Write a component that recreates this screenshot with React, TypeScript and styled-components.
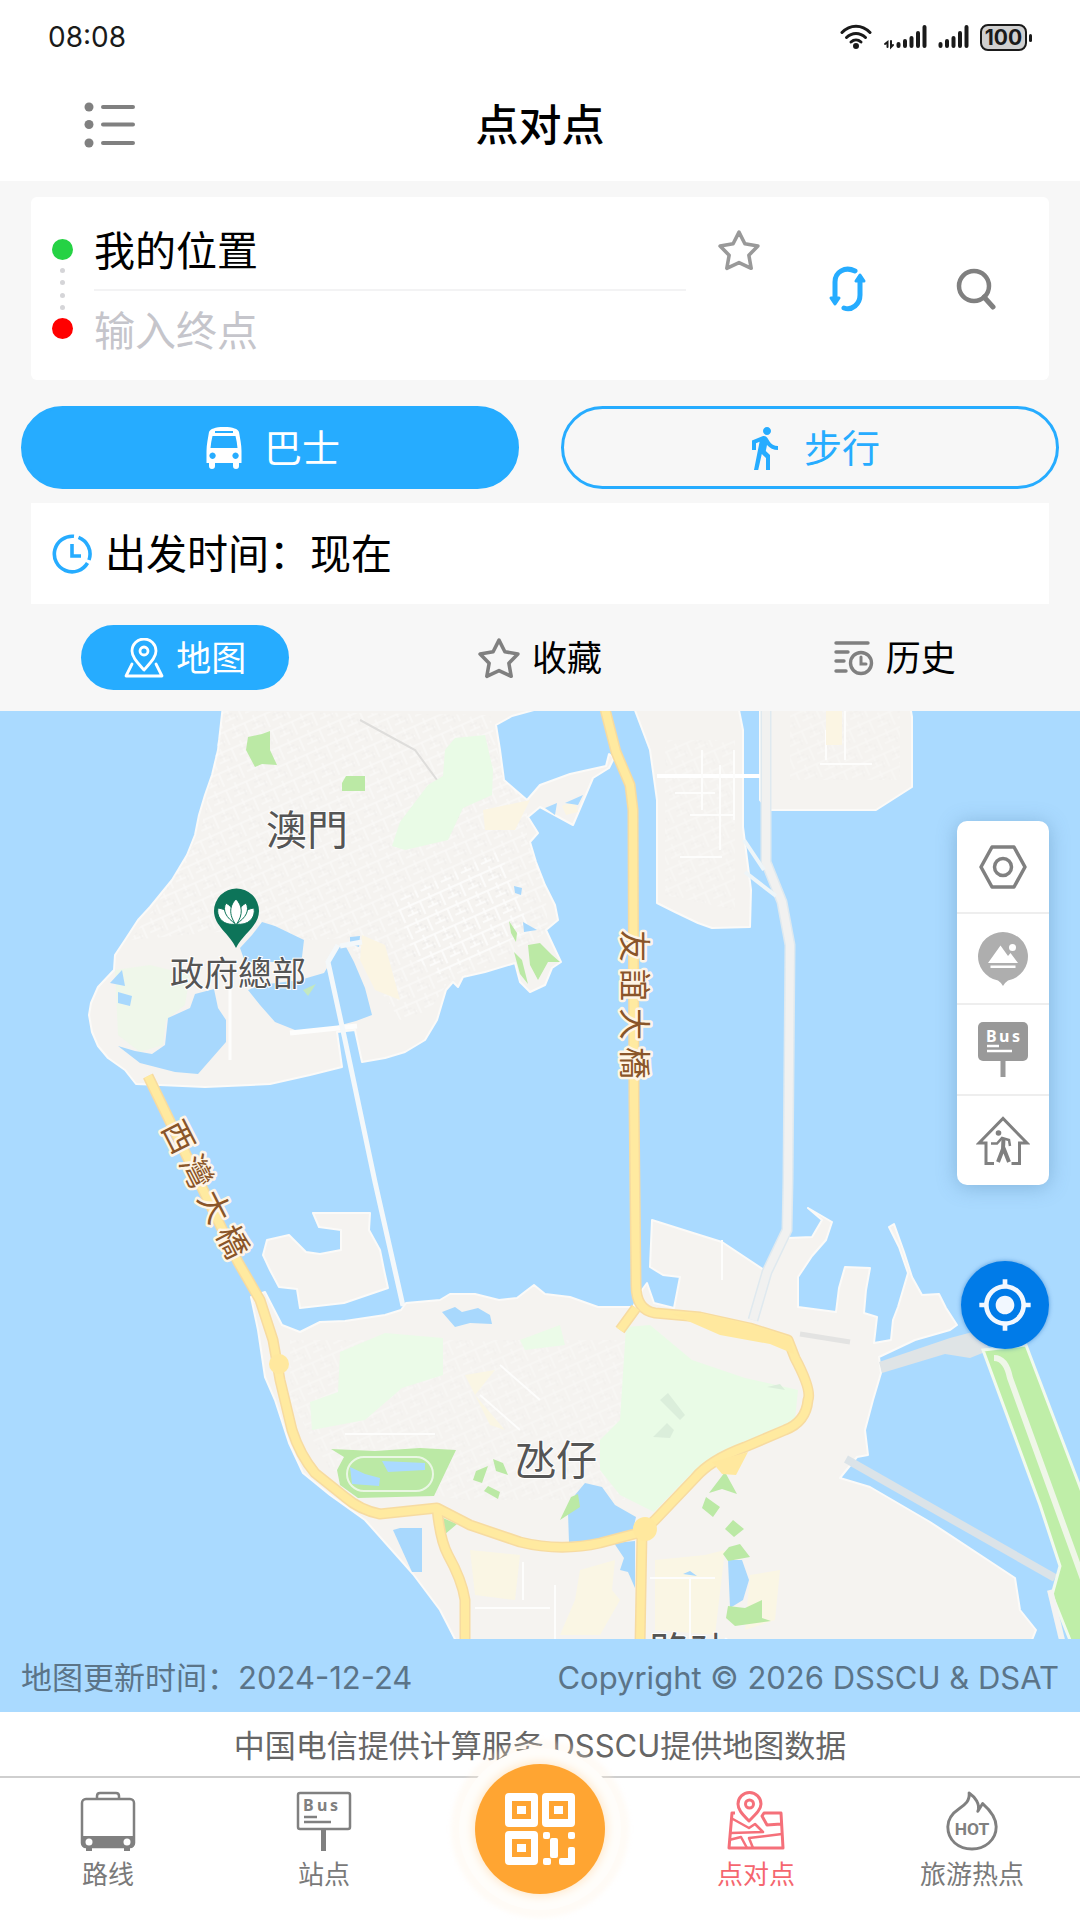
import React, { useState } from "react";
import styled, { createGlobalStyle, css } from "styled-components";
import { MdDirectionsWalk, MdMyLocation } from "react-icons/md";

const BLUE = "#26acff";
const GREY = "#808080";

const GlobalStyle = createGlobalStyle`
  * {
    box-sizing: border-box;
  }
  body {
    margin: 0;
    background: #fff;
    font-family: Inter, "Noto Sans CJK SC", sans-serif;
    color: #000;
  }
  button, input {
    font: inherit;
    color: inherit;
    border: 0;
    padding: 0;
    background: none;
  }
  svg {
    display: block;
    flex: none;
  }
`;

// ---------- icons ----------
const STAR = "M20 3 L25.6 14 L38 16.2 L29.4 25 L31.6 37.4 L20 32 L8.4 37.4 L10.6 25 L2 16.2 L14.4 14 Z";

const StarIcon = ({ color = "#999" }: { color?: string }) => (
  <svg width="42" height="42" viewBox="0 0 40 40" fill="none" stroke={color} strokeWidth="3.4" strokeLinejoin="round">
    <path d={STAR} />
  </svg>
);

const WifiIcon = () => (
  <svg width="32" height="26" viewBox="0 0 32 26" fill="none" stroke="#1a1a1a" strokeWidth="3" strokeLinecap="round">
    <path d="M2 8.5 C10 0 22 0 30 8.5" />
    <path d="M6.5 13.5 C12 8 20 8 25.5 13.5" />
    <path d="M11 18 C14 15.3 18 15.3 21 18" />
    <circle cx="16" cy="22" r="2" fill="#1a1a1a" strokeWidth="2" />
  </svg>
);

const SignalIcon = ({ data }: { data?: boolean }) => (
  <svg width={data ? 44 : 31} height="26" viewBox={data ? "-13 0 44 26" : "0 0 31 26"} stroke="#1a1a1a" strokeWidth="4" strokeLinecap="round">
    <path d="M2.5 20 V22 M9 17 V22 M15.5 14 V22 M22 9 V22 M28.5 3 V22" />
    {data && <path d="M-8.5 23 V18 L-11 20 M-5 17 V23 L-3 21" strokeWidth="2" fill="none" />}
  </svg>
);

const MenuIcon = () => (
  <svg width="52" height="46" viewBox="0 0 52 46" stroke={GREY} strokeWidth="4" strokeLinecap="round" fill={GREY}>
    <path d="M19 5 H49 M19 22.5 H49 M19 41 H49" />
    <g stroke="none">
      <circle cx="5" cy="5" r="4.5" />
      <circle cx="5" cy="22.5" r="4.5" />
      <circle cx="5" cy="41" r="4.5" />
    </g>
  </svg>
);

const SwapIcon = () => (
  <svg width="38" height="46" viewBox="0 0 38 46" fill="none" stroke={BLUE} strokeWidth="5" strokeLinecap="round" strokeLinejoin="round">
    <path d="M27 5 C17 0 7 6 7 16 V32" />
    <path d="M16 42 C24 45 32 38 32 29 V14" />
    <path d="M3 32 H11 L7 38 Z M28 15 H36 L32 9 Z" fill={BLUE} strokeWidth="3" />
  </svg>
);

const SearchIcon = () => (
  <svg width="40" height="42" viewBox="0 0 40 42" fill="none" stroke={GREY} strokeWidth="4.5">
    <circle cx="18" cy="18" r="15" />
    <path d="M28 29 L37 39" strokeWidth="5" strokeLinecap="round" />
  </svg>
);

const BusIcon = () => (
  <svg width="48" height="42" viewBox="-6 0 48 42">
    <path
      fill="#fff"
      fillRule="evenodd"
      d="M18 0 C27 0 32 2 33 5 C34 11 35.5 18 35.5 24 V36 H33 V39 Q33 42 30 42 Q27 42 27 39 V36 H9 V39 Q9 42 6 42 Q3 42 3 39 V36 H.5 V24 C.5 18 2 11 3 5 C4 2 9 0 18 0 Z M9 4 V6 H27 V4 Z M6.500 9 Q5 15 4.5 21 H31.5 Q31 15 29.5 9 Z M6.5 25.5 a3.2 3.2 0 1 0 .1 0 Z M29.5 25.5 a3.2 3.2 0 1 0 .1 0 Z"
    />
  </svg>
);

const ClockIcon = () => (
  <svg width="40" height="40" viewBox="0 0 40 40" fill="none" stroke={BLUE} strokeWidth="3.6">
    <path d="M22 2.3 A17.8 17.8 0 1 0 35.5 29" />
    <path d="M26.5 3.4 A17.8 17.8 0 0 1 37 26" />
    <path d="M20 10 V22 H29" />
  </svg>
);

const MapPinIcon = () => (
  <svg width="40" height="40" viewBox="0 0 40 40" fill="none" stroke="#fff" strokeWidth="2.8" strokeLinecap="round" strokeLinejoin="round">
    <path d="M20 32 C13 24 8 19 8 13 A12 12 0 0 1 32 13 C32 19 27 24 20 32 Z" />
    <circle cx="20" cy="13" r="4" />
    <path d="M8 26 L2 38 H38 L32 26" />
  </svg>
);

const HistoryIcon = () => (
  <svg width="40" height="36" viewBox="0 0 40 36" fill="none" stroke={GREY} strokeWidth="3.4" strokeLinecap="round">
    <path d="M2 3 H34 M2 12 H14 M2 21 H10 M2 31 H12" />
    <circle cx="27" cy="23" r="10.5" />
    <path d="M27 17 V24 H32" strokeWidth="3" />
  </svg>
);

const HexIcon = () => (
  <svg width="48" height="44" viewBox="0 0 48 44" fill="none" stroke={GREY} strokeWidth="3.5" strokeLinejoin="round">
    <path d="M13 2 H35 L46 22 L35 42 H13 L2 22 Z" />
    <circle cx="24" cy="22" r="8.5" />
  </svg>
);

const ScenicIcon = () => (
  <svg width="50" height="54" viewBox="0 0 50 54">
    <path fill="#aeaeae" d="M25 0 A25 24.5 0 0 1 30 48.5 Q27.5 50 25 54 Q22.5 50 20 48.5 A25 24.5 0 0 1 25 0 Z" />
    <path fill="#fff" d="M10 31 L22.5 13.5 L30 24 L32.5 21 L40 31 Z M12.5 33.5 H37.5 V36 H12.5 Z" />
    <circle cx="34.5" cy="15.5" r="3.5" fill="#fff" />
  </svg>
);

const BusSignIcon = () => (
  <svg width="50" height="56" viewBox="0 0 50 56">
    <rect width="50" height="39" rx="5" fill="#999" />
    <path d="M22.5 39 H27.5 V55 H22.5 Z" fill="#999" />
    <path d="M9 24 H21 M9 29 H34" stroke="#fff" strokeWidth="2.5" />
    <SignText x="8 21 34" y="20" fill="#fff">
      Bus
    </SignText>
  </svg>
);

const HomeWalkIcon = () => (
  <svg width="54" height="50" viewBox="0 0 54 50" fill="none" stroke={GREY} strokeWidth="3">
    <path d="M18 47.5 H10 V27 H3 L27 2.5 L51 27 H43.5 V47.5 H35.5" />
    <circle cx="22.5" cy="17" r="2.8" fill={GREY} stroke="none" />
    <path d="M15 27.5 H21 L26 22 L33 24 L34 30" strokeWidth="2.5" />
    <path d="M27.5 22 L27 33 L22 46 M27.5 32 L33 46" strokeWidth="4" />
  </svg>
);

const RouteIcon = () => (
  <svg width="56" height="60" viewBox="0 0 56 60" fill="none" stroke={GREY} strokeWidth="2.5">
    <path d="M17 7 V5 Q17 2 20 2 H36 Q39 2 39 5 V7" />
    <rect x="2" y="8" width="52" height="48" rx="4" />
    <path d="M3 45 H53 V56 H50 V60 H44 V57 H12 V60 H6 V56 H3 Z" fill={GREY} stroke="none" />
    <circle cx="9" cy="51" r="3.5" fill="#fff" stroke="none" />
    <circle cx="47" cy="51" r="3.5" fill="#fff" stroke="none" />
  </svg>
);

const StopIcon = () => (
  <svg width="56" height="60" viewBox="0 0 56 60" fill="none" stroke={GREY} strokeWidth="2.5">
    <rect x="2" y="2" width="52" height="36" rx="2" />
    <path d="M27.5 38 V60" strokeWidth="5" />
    <path d="M8 26 H21 M8 31 H35" />
    <SignText x="7 21 34" y="20" fill={GREY}>
      Bus
    </SignText>
  </svg>
);

const P2PIcon = () => (
  <svg width="58" height="60" viewBox="0 0 58 60" fill="none" stroke="#f5707a" strokeWidth="3" strokeLinejoin="round">
    <path d="M22 30 C14 22 11 18 11 13 A11.5 11.5 0 0 1 34 13 C34 18 30 22 22 30 Z" />
    <circle cx="22.5" cy="13" r="4" />
    <path d="M8 22 H5 L2 57 H56 L54 22 H37 L35 25 L40 34 L54 33" />
    <path d="M4 27 L22 37 L28 33 L36 41 L4 42 M2 49 L14 46 L20 57 M55 43 L22 47 L26 57" strokeWidth="2.5" />
  </svg>
);

const HotIcon = () => (
  <svg width="54" height="60" viewBox="0 0 54 62" fill="none" stroke={GREY} strokeWidth="3" strokeLinejoin="round">
    <path d="M24 2 C30 6 36 14 33 21 L38 13 C46 20 52 28 52 37 C52 51 40 60 27 60 C13 60 2 51 2 37 C2 28 8 22 14 18 C20 14 25 10 24 2 Z" />
    <HotText x="27" y="45" fill={GREY} stroke="none" textAnchor="middle">
      HOT
    </HotText>
  </svg>
);

const QrIcon = () => (
  <svg width="70" height="72" viewBox="0 0 70 72" fill="#fff">
    {["M0 0", "M37 0", "M0 38"].map((m) => (
      <path
        key={m}
        fillRule="evenodd"
        d={`${m} m4 0 h25 q4 0 4 4 v26 q0 4 -4 4 h-25 q-4 0 -4 -4 v-26 q0 -4 4 -4 z m3 8 v18 h19 v-18 z m5 5 h9 v8 h-9 z`}
      />
    ))}
    <g>
      <rect x="38" y="39" width="7" height="7" rx="2" />
      <rect x="45" y="45" width="8" height="20" rx="2" />
      <rect x="38" y="65" width="8" height="7" rx="2" />
      <rect x="63" y="39" width="7" height="7" rx="2" />
      <path d="M65 54 h3 q2 0 2 2 v14 q0 2 -2 2 h-12 q-2 0 -2 -2 v-3 q0 -2 2 -2 h7 v-9 q0 -2 2 -2 z" />
    </g>
  </svg>
);

// ---------- map drawing ----------
const MapArt = () => (
  <MapSvg viewBox="0 711 1080 928" preserveAspectRatio="xMidYMid slice" role="img" aria-label="澳門">
    <defs>
      <pattern id="streets" width="22" height="18" patternUnits="userSpaceOnUse" patternTransform="rotate(-24)">
        <path d="M0 4 H22 M0 13 H14 M6 0 V13 M17 4 V18" stroke="#fff" strokeWidth="1.5" fill="none" />
        <path d="M2 8 H10 M12 10 V17" stroke="#e9e7e5" strokeWidth="1" fill="none" />
      </pattern>
    </defs>
    <rect x="0" y="711" width="1080" height="928" fill="#aadaff" />

    {/* peninsula */}
    <g fill="#f5f3f0" stroke="#fbfaf8" strokeWidth="2" strokeLinejoin="round">
      <path d="M223 705 L218 750 L212 775 L205 795 L199 815 L195 835 L187 855 L172 880 L150 907 L138 920 L125 940 L115 955 L114 970 L98 987 L91 1003 L89 1015 L92 1032 L98 1046 L108 1058 L125 1070 L136 1084 L160 1085 L205 1087 L270 1084 L310 1075 L342 1067 L337 1032 L355 1030 L362 1062 L385 1058 L405 1052 L425 1040 L437 1020 L446 990 L453 982 L458 987 L463 977 L485 972 L515 963 L520 982 L530 992 L545 985 L552 968 L561 962 L553 945 L546 930 L558 920 L555 905 L545 885 L536 862 L530 842 L538 833 L528 817 L540 807 L573 825 L593 778 L609 768 L614 758 L609 754 L606 766 L570 774 L540 785 L527 800 L504 780 L500 750 L496 725 L512 716 L534 710 L534 705 Z" />
      <path d="M633 705 L650 750 L657 800 L657 903 L675 912 L698 923 L712 928 L750 927 L751 890 L743 827 L743 730 L738 705 Z" />
      <path d="M760 705 V800 L769 810 H876 L912 787 V717 L910 705 Z" />
    </g>
    <g fill="url(#streets)">
      <path d="M223 711 L212 775 L200 835 L155 907 L130 940 L240 930 L310 940 L345 938 L400 1020 L430 1010 L446 985 L515 955 L548 930 L545 885 L527 840 L527 800 L504 780 L490 715 Z" opacity=".45" />
      <path d="M395 900 L500 850 L530 930 L440 975 L415 960 Z" opacity=".6" />
      <path d="M665 740 H735 V910 L665 895 Z" opacity=".3" />
      <path d="M790 711 H900 V780 H790 Z" opacity=".3" />
    </g>
    <path d="M360 720 L415 750 L437 780 L458 818" fill="none" stroke="#dedddb" strokeWidth="2" />
    <path d="M657 776 H760" fill="none" stroke="#fff" strokeWidth="4" />
    <path d="M702 750 V810 M720 765 V850 M734 750 V820 M675 793 H715 M690 815 H735 M680 857 H722 M820 764 H872 M826 730 V760 M845 711 V760" fill="none" stroke="#fdfdfc" strokeWidth="2" />
    <path d="M445 750 L455 738 L485 735 L493 770 L492 795 L463 808 L448 840 L405 850 L392 846 L400 822 L428 785 L443 776 Z" fill="#e9fbe6" />
    <path d="M115 970 L150 965 L190 975 L185 1005 L166 1020 L163 1045 L140 1052 L118 1035 Z" fill="#eff7ea" />
    <path d="M362 935 L385 945 L400 1000 L375 990 L360 960 Z M826 711 H842 V745 H826 Z M483 810 L530 800 L515 830 L485 830 Z M562 806 L575 800 L578 812 L566 815 Z" fill="#fbf5e3" />
    <g fill="#bbe9a5">
      <path d="M248 737 L262 734 L270 731 L270 750 L277 765 L262 764 L255 767 L246 750 Z" />
      <path d="M346 776 H365 V791 H342 V783 Z" />
      <path d="M509 921 L517 933 L516 942 L511 933 Z M514 952 L522 960 L528 984 L520 974 Z M528 945 L540 943 L552 955 L560 962 L548 962 L538 980 L530 965 Z" />
    </g>
    <g fill="#a8d8fd">
      <path d="M262 922 L275 926 L304 940 L302 957 L300 962 L245 962 L240 948 L252 935 Z" />
      <path d="M300 980 L324 973 L330 963 L334 948 L345 945 L354 962 L365 988 L372 1015 L356 1021 L330 1028 L300 1032 L275 1022 L260 1005 L248 990 L260 985 Z" />
      <path d="M195 994 L214 989 L218 1008 L226 1020 L226 1042 L212 1058 L198 1074 L175 1072 L140 1063 L118 1046 L135 1051 L152 1054 L165 1045 L168 1018 L190 1008 Z" />
      <path d="M118 992 L132 996 L130 1006 L118 1003 Z M122 970 L125 986 L110 983 Z M350 937 L360 936 L359 947 L350 944 Z M514 886 L522 888 L521 895 L515 893 Z M523 922 L537 930 L524 932 Z" />
    </g>
    <path d="M545 808 L557 803 L555 815 Z M583 795 L578 805 L565 803 Z" fill="#aadaff" />
    <path d="M303 990 L316 984 L308 996 Z" fill="#c3e8c0" />
    <path d="M230 975 V1060" stroke="#fdfdfc" strokeWidth="3" />
    <path d="M290 1033 L357 1026" stroke="#fdfdfc" strokeWidth="5" />
    <path d="M338 945 L328 962 L345 1040 L375 1182 L403 1306" fill="none" stroke="#f4f8fa" strokeWidth="5" />
    <path d="M340 946 L362 942" fill="none" stroke="#f4f8fa" strokeWidth="5" />

    {/* Taipa and the islands */}
    <g fill="#f5f3f0" stroke="#fbfaf8" strokeWidth="2" strokeLinejoin="round">
      <path d="M251 1297 L265 1292 L282 1325 L300 1332 L320 1322 L345 1321 L385 1315 L401 1310 L406 1303 L440 1300 L450 1294 L475 1294 L499 1300 L517 1298 L526 1291 L534 1285 L545 1294 L570 1297 L598 1307 L633 1307 L642 1290 L647 1283 L654 1303 L674 1308 L680 1277 L663 1275 L650 1267 L652 1220 L690 1232 L722 1242 L764 1270 L788 1238 L812 1237 L822 1220 L808 1208 L832 1222 L826 1240 L812 1256 L798 1277 L798 1307 L836 1312 L839 1288 L845 1267 L870 1268 L866 1290 L864 1313 L877 1317 L874 1343 L891 1340 L893 1320 L898 1307 L908 1273 L899 1247 L889 1227 L894 1224 L904 1252 L912 1277 L922 1295 L939 1294 L946 1308 L957 1325 L950 1330 L915 1340 L879 1357 L881 1373 L873 1400 L865 1430 L868 1455 L857 1457 L840 1478 L870 1487 L930 1522 L1015 1578 L1020 1610 L1036 1630 L1030 1645 L458 1645 L440 1610 L413 1574 L365 1520 L330 1495 L303 1473 L289 1443 L275 1400 L265 1377 L258 1330 Z" />
      <path d="M313 1213 H370 L369 1230 L380 1250 L384 1270 L388 1288 L344 1303 L300 1308 L297 1289 L279 1287 L270 1270 L263 1255 L267 1240 L289 1235 L306 1252 L320 1254 L341 1250 V1230 L319 1227 Z" />
    </g>
    <path d="M290 1340 H640 L625 1500 H460 L330 1470 L290 1400 Z" fill="url(#streets)" opacity=".3" />
    <path d="M340 1352 L385 1333 L443 1338 V1375 L402 1388 L365 1420 L312 1430 L310 1402 L338 1392 Z M520 1340 L560 1325 L565 1345 L525 1350 Z" fill="#ebfbe8" />
    <path d="M626 1327 L650 1325 L692 1360 L745 1378 L798 1390 L795 1420 L733 1447 L690 1475 L654 1512 L620 1495 L600 1470 L600 1440 L620 1420 Z" fill="#e9fbe6" />
    <path d="M660 1400 L668 1393 L685 1415 L680 1420 Z M653 1437 L667 1423 L674 1430 L670 1438 Z M767 1387 L780 1384 L785 1390 Z" fill="#dbeedb" />
    <path d="M465 1375 L495 1370 L475 1395 L505 1430 L490 1425 Z M580 1570 L615 1560 L612 1590 L620 1600 L600 1635 H560 L575 1600 Z M655 1560 L705 1555 L725 1550 L715 1635 L655 1630 Z M750 1575 L780 1570 L775 1620 L745 1630 Z M470 1550 L520 1555 L515 1600 L475 1595 Z" fill="#faf6e4" />
    <path d="M345 1434 H435 M475 1608 H550 M523 1562 V1600 M650 1578 H715 M690 1578 V1639 M722 1240 V1280 M555 1585 V1639 M480 1395 L520 1430 M500 1365 L540 1400" fill="none" stroke="#fdfdfc" strokeWidth="2" />
    <g fill="#a8d8fd">
      <path d="M442 1312 L455 1307 L462 1312 L478 1308 L490 1315 L492 1324 L470 1323 L455 1327 Z" />
      <path d="M393 1530 L400 1528 H422 V1572 H412 Z" />
      <path d="M568 1513 L575 1495 L585 1483 L602 1487 L615 1505 L636 1517 L633 1530 L600 1540 L569 1542 Z" />
      <path d="M614 1543 L635 1541 V1588 L628 1572 L620 1570 L624 1558 Z" />
      <path d="M728 1560 H742 L749 1580 L743 1600 L730 1608 Z M683 1574 L690 1571 L697 1576 Z" />
    </g>
    <g fill="#bbe9a5">
      <path d="M331 1449 L375 1451 L420 1448 L456 1450 L434 1496 L358 1498 L340 1485 L337 1470 L344 1457 Z" />
      <path d="M476 1471 L488 1466 L482 1483 L473 1480 Z M493 1459 L503 1463 L508 1475 L496 1471 Z M488 1486 L500 1492 L498 1499 L484 1491 Z M443 1518 L457 1524 L444 1535 Z" />
      <path d="M571 1497 L578 1494 L580 1507 L560 1520 Z M725 1472 L737 1494 L722 1489 L709 1493 Z M706 1497 L720 1507 L713 1517 L702 1508 Z M733 1520 L744 1529 L734 1537 L725 1529 Z M729 1547 L740 1544 L750 1557 L728 1561 L723 1554 Z" />
      <path d="M728 1606 L745 1608 L762 1600 V1618 L771 1621 L735 1626 L726 1618 Z" />
    </g>
    <rect x="347" y="1457" width="86" height="34" rx="17" fill="none" stroke="#eaf7e4" strokeWidth="2" />
    <path d="M350 1467 L365 1474 L380 1478 L379 1486 L352 1484 Z M382 1461 L425 1463 L425 1470 L388 1472 Z" fill="#aadaff" />

    {/* airport runway */}
    <path d="M879 1362 L950 1338 L980 1330 L990 1350 L970 1358 L945 1354 L882 1373 Z" fill="#dfe4e6" />
    <path d="M846 1459 L1055 1578" stroke="#dbe3e8" strokeWidth="8" />
    <path d="M983 1350 L1026 1345 L1085 1500 V1645 H1072 L1052 1595 L1060 1566 L1040 1505 Z" fill="#bfeea8" stroke="#f2faee" strokeWidth="3" />
    <path d="M1050 1590 L1062 1640" stroke="#f4f3f1" strokeWidth="6" />
    <path d="M994 1358 Q1006 1358 1010 1378 L1084 1582" fill="none" stroke="#eff6e8" strokeWidth="6" />

    {/* minor bridge */}
    <path d="M766 711 V862 L782 902 L790 945 L788 1180 L787 1230 L767 1272 L753 1320" fill="none" stroke="#dfe9ef" strokeWidth="11" />
    <path d="M766 711 V862 L782 902 L790 945 L788 1180 L787 1230 L767 1272 L753 1320" fill="none" stroke="#f1f1f0" strokeWidth="8" />
    <path d="M744 840 L764 870 M745 872 L776 896" fill="none" stroke="#eef5f8" strokeWidth="4" />
    <path d="M800 1334 L850 1342" stroke="#e3e3e2" strokeWidth="5" />

    {/* highways */}
    {["#f7dba0", "#ffeaa0"].map((color, i) => (
      <g key={color} fill="none" stroke={color} strokeWidth={i ? 8 : 11} strokeLinejoin="round">
        <path d="M604 705 L616 752 L630 785 L633 810 L634 1100 L636 1285 Q636 1310 655 1313 L700 1317 L750 1328 L788 1340 L795 1358 Q812 1390 808 1400 Q806 1422 785 1430 L745 1447 Q710 1460 695 1478 L655 1520 L642 1532 L600 1543 Q560 1552 520 1542 L470 1525 L437 1508 L380 1514 Q360 1510 345 1497 L315 1473 Q300 1455 292 1430 L280 1380 L273 1340 L260 1300 L238 1262 L148 1076" />
        <path d="M437 1508 Q440 1540 448 1555 Q462 1580 465 1600 V1645 M642 1532 L640 1645 M636 1308 L620 1330" />
      </g>
    ))}
    <circle cx="279" cy="1364" r="10" fill="#ffe89e" />
    <circle cx="645" cy="1529" r="12" fill="#ffe89e" />
    <path d="M672 1314 L700 1313 L760 1327 L790 1338 L794 1354 L770 1344 L720 1335 Z M712 1462 L748 1452 L736 1475 L722 1474 Z" fill="#ffe89e" />

    {/* place names */}
    <PlaceName x="307" y="845" $size={41}>澳門</PlaceName>
    <PlaceName x="556" y="1475" $size={41}>氹仔</PlaceName>
    <PlaceName x="690" y="1667" $size={41}>路氹</PlaceName>
    <PlaceName x="238" y="986" $size={34}>政府總部</PlaceName>
    {["友", "誼", "大", "橋"].map((c, i) => (
      <BridgeName key={c} transform={`translate(634 ${946 + i * 39}) rotate(90)`} y="11">{c}</BridgeName>
    ))}
    {["西", "灣", "大", "橋"].map((c, i) => (
      <BridgeName key={c} transform={`translate(${178 + i * 18} ${1137 + i * 35}) rotate(63)`} y="11">{c}</BridgeName>
    ))}

    {/* headquarters pin */}
    <path d="M236 948 C230 934 214 926 214 911 A22.5 22.5 0 0 1 259 911 C259 926 243 934 236 948 Z" fill="#0d7459" />
    <g fill="#fff" stroke="#0d7459" strokeWidth="1">
      <path d="M236 924 C224 926 216 918 218 908 C226 909 233 914 236 924 Z M236 924 C248 926 256 918 254 908 C246 909 239 914 236 924 Z" />
      <path d="M236 924 C226 918 222 910 226 903 C233 907 236 914 236 924 Z M236 924 C246 918 250 910 246 903 C239 907 236 914 236 924 Z" />
      <path d="M236 925 C228 914 230 905 236 899 C242 905 244 914 236 925 Z" />
    </g>
  </MapSvg>
);

// ---------- page ----------
const tabs = [
  { key: "map", label: "地图", icon: <MapPinIcon /> },
  { key: "fav", label: "收藏", icon: <StarIcon color={GREY} /> },
  { key: "history", label: "历史", icon: <HistoryIcon /> },
];

const tools = [
  { label: "图层", icon: <HexIcon /> },
  { label: "景点", icon: <ScenicIcon /> },
  { label: "巴士站", icon: <BusSignIcon /> },
  { label: "步行回家", icon: <HomeWalkIcon /> },
];

const App: React.FC = () => {
  const [from, setFrom] = useState("我的位置");
  const [to, setTo] = useState("");
  const [mode, setMode] = useState("bus");
  const [tab, setTab] = useState("map");

  const swap = () => {
    setFrom(to);
    setTo(from);
  };

  return (
    <Page>
      <GlobalStyle />
      <StatusBar>
        <span>08:08</span>
        <StatusIcons>
          <WifiIcon />
          <SignalIcon data />
          <SignalIcon />
          <Battery>100</Battery>
        </StatusIcons>
      </StatusBar>
      <Header>
        <IconButton aria-label="菜单">
          <MenuIcon />
        </IconButton>
        <Title>点对点</Title>
      </Header>

      <SearchArea>
        <RouteCard>
          <Rail>
            <Dot $color="#25d244" $size={21} />
            <Dot $color="#d5d5d8" $size={5} />
            <Dot $color="#d5d5d8" $size={5} />
            <Dot $color="#d5d5d8" $size={5} />
            <Dot $color="#d5d5d8" $size={5} />
            <Dot $color="#ff0000" $size={21} />
          </Rail>
          <Fields>
            <Field aria-label="起点" value={from} onChange={(e) => setFrom(e.target.value)} />
            <Field aria-label="终点" placeholder="输入终点" value={to} onChange={(e) => setTo(e.target.value)} />
          </Fields>
          <StarButton aria-label="收藏起点">
            <StarIcon />
          </StarButton>
          <CardButton aria-label="交换" onClick={swap}>
            <SwapIcon />
          </CardButton>
          <CardButton aria-label="搜索">
            <SearchIcon />
          </CardButton>
        </RouteCard>

        <Modes>
          <ModeButton $active={mode === "bus"} onClick={() => setMode("bus")}>
            <BusIcon />
            巴士
          </ModeButton>
          <ModeButton $active={mode === "walk"} onClick={() => setMode("walk")}>
            <MdDirectionsWalk size={48} />
            步行
          </ModeButton>
        </Modes>

        <TimeButton>
          <ClockIcon />
          出发时间：现在
        </TimeButton>

        <Tabs>
          {tabs.map((t) => (
            <Tab key={t.key} $active={tab === t.key} onClick={() => setTab(t.key)}>
              {t.icon}
              {t.label}
            </Tab>
          ))}
        </Tabs>
      </SearchArea>

      <MapArea>
        <MapArt />
        <MapControls>
          <Toolbox>
            {tools.map((t) => (
              <ToolButton key={t.label} aria-label={t.label}>
                {t.icon}
              </ToolButton>
            ))}
          </Toolbox>
          <LocateButton aria-label="定位">
            <MdMyLocation size={56} />
          </LocateButton>
        </MapControls>
      </MapArea>
      <MapFooter>
        <span>地图更新时间：2024-12-24</span>
        <span>Copyright © 2026 DSSCU & DSAT</span>
      </MapFooter>
      <Provider>中国电信提供计算服务 DSSCU提供地图数据</Provider>

      <BottomNav>
        <NavItem href="#route">
          <RouteIcon />
          路线
        </NavItem>
        <NavItem href="#stop">
          <StopIcon />
          站点
        </NavItem>
        <QrSlot>
          <QrButton aria-label="扫码">
            <QrIcon />
          </QrButton>
        </QrSlot>
        <NavItem href="#p2p" $active>
          <P2PIcon />
          点对点
        </NavItem>
        <NavItem href="#hot">
          <HotIcon />
          旅游热点
        </NavItem>
      </BottomNav>
    </Page>
  );
};

const Page = styled.div`
  display: flex;
  flex-direction: column;
  min-height: 100vh;
  overflow: hidden;
`;

const StatusBar = styled.div`
  display: flex;
  align-items: center;
  justify-content: space-between;
  height: 72px;
  padding: 2px 48px 0;
  font-size: 28px;
  line-height: 40px;
  color: #1a1a1a;
`;

const StatusIcons = styled.div`
  display: flex;
  align-items: center;
  gap: 11px;
`;

const Battery = styled.span`
  position: relative;
  width: 47px;
  height: 27px;
  border: 2px solid #1a1a1a;
  border-radius: 8px;
  background: #d0d0d0;
  font-size: 21px;
  font-weight: 700;
  line-height: 23px;
  text-align: center;
  margin-right: 5px;
  &::after {
    content: "";
    position: absolute;
    right: -7px;
    top: 8px;
    width: 3px;
    height: 8px;
    border-radius: 2px;
    background: #1a1a1a;
  }
`;

const IconButton = styled.button`
  display: flex;
  align-items: center;
  justify-content: center;
  cursor: pointer;
`;

const Header = styled.header`
  display: grid;
  grid-template-columns: 1fr auto 1fr;
  align-items: center;
  justify-items: start;
  height: 109px;
  padding: 0 84px 4px;
`;

const Title = styled.h1`
  margin: 0;
  font-size: 43px;
  line-height: 60px;
  font-weight: 500;
`;

const SearchArea = styled.section`
  background: #f7f7f7;
  padding-top: 16px;
`;

const RouteCard = styled.div`
  display: grid;
  grid-template-columns: 63px 1fr 105px 112px 146px;
  margin: 0 31px;
  padding: 14px 0 9px;
  border-radius: 6px;
  background: #fff;
`;

const Rail = styled.div`
  display: flex;
  flex-direction: column;
  align-items: center;
  justify-content: space-between;
  margin: 28px 0 32px;
`;

const Dot = styled.i<{ $color: string; $size: number }>`
  width: ${(p) => p.$size}px;
  height: ${(p) => p.$size}px;
  border-radius: 50%;
  background: ${(p) => p.$color};
`;

const Fields = styled.div`
  display: flex;
  flex-direction: column;
`;

const Field = styled.input`
  width: 100%;
  height: 80px;
  font-size: 41px;
  line-height: 60px;
  outline: none;
  &:first-child {
    padding-bottom: 4px;
    border-bottom: 2px solid #f3f3f4;
  }
  &::placeholder {
    color: #c5c5cb;
    opacity: 1;
  }
`;

const StarButton = styled(IconButton)`
  height: 78px;
`;

const CardButton = styled(IconButton)`
  padding-bottom: 5px;
`;

const Modes = styled.div`
  display: grid;
  grid-template-columns: 1fr 1fr;
  gap: 42px;
  margin: 26px 21px 14px;
`;

const ModeButton = styled.button<{ $active: boolean }>`
  display: flex;
  align-items: center;
  justify-content: center;
  gap: 16px;
  height: 83px;
  border: 3px solid ${BLUE};
  border-radius: 42px;
  font-size: 38px;
  line-height: 52px;
  cursor: pointer;
  color: ${(p) => (p.$active ? "#fff" : BLUE)};
  background: ${(p) => (p.$active ? BLUE : "transparent")};
`;

const TimeButton = styled.button`
  display: flex;
  align-items: center;
  gap: 13px;
  width: calc(100% - 62px);
  height: 101px;
  margin: 0 31px;
  padding: 0 21px;
  background: #fff;
  font-size: 41px;
  line-height: 60px;
  cursor: pointer;
`;

const Tabs = styled.div`
  display: grid;
  grid-template-columns: repeat(3, 1fr);
  justify-items: center;
  padding: 21px 8px;
`;

const Tab = styled.button<{ $active: boolean }>`
  display: flex;
  align-items: center;
  gap: 12px;
  height: 65px;
  padding: 0 43px;
  border-radius: 33px;
  font-size: 35px;
  line-height: 50px;
  cursor: pointer;
  ${(p) =>
    p.$active &&
    css`
      background: ${BLUE};
      color: #fff;
    `}
`;

const MapArea = styled.main`
  position: relative;
  flex: 1;
  min-height: 600px;
  overflow: hidden;
  background: #aadaff;
`;

const MapSvg = styled.svg`
  position: absolute;
  inset: 0;
  width: 100%;
  height: 100%;
`;

const PlaceName = styled.text<{ $size: number }>`
  font-family: "Noto Sans CJK TC", sans-serif;
  font-size: ${(p) => p.$size}px;
  text-anchor: middle;
  fill: #555;
  stroke: #fff;
  stroke-width: 2px;
  paint-order: stroke;
`;

const BridgeName = styled.text`
  font-family: "Noto Sans CJK TC", sans-serif;
  font-size: 32px;
  text-anchor: middle;
  fill: #8a5529;
  stroke: #fff5e6;
  stroke-width: 5px;
  stroke-linejoin: round;
  paint-order: stroke;
`;

const SignText = styled.text`
  font-family: "Noto Sans", sans-serif;
  font-size: 16px;
  font-weight: 700;
  stroke: none;
`;

const HotText = styled.text`
  font-family: "Liberation Sans Narrow", Roboto, sans-serif;
  font-size: 18px;
  font-weight: 700;
`;

const MapControls = styled.div`
  position: absolute;
  top: 110px;
  right: 31px;
  display: flex;
  flex-direction: column;
  align-items: center;
  gap: 76px;
`;

const Toolbox = styled.div`
  width: 92px;
  border-radius: 10px;
  background: #fff;
  box-shadow: 0 2px 20px rgba(60, 110, 150, 0.35);
`;

const ToolButton = styled(IconButton)`
  width: 100%;
  height: 91px;
  & + & {
    border-top: 2px solid #eeeeee;
  }
`;

const LocateButton = styled(IconButton)`
  width: 88px;
  height: 88px;
  border-radius: 50%;
  background: #007be8;
  color: #f2f8ff;
  align-self: flex-end;
  box-shadow: 0 0 4px rgba(0, 90, 180, 0.5);
`;

const MapFooter = styled.div`
  display: flex;
  align-items: center;
  justify-content: space-between;
  height: 73px;
  padding: 4px 21px 0;
  background: #aadaff;
  color: #5b7488;
  font-size: 31px;
  line-height: 44px;
`;

const Provider = styled.div`
  height: 64px;
  padding-top: 2px;
  color: #666;
  font-size: 31px;
  line-height: 64px;
  text-align: center;
`;

const BottomNav = styled.nav`
  display: grid;
  grid-template-columns: repeat(5, 1fr);
  height: 144px;
  border-top: 2px solid #cfcfcf;
`;

const NavItem = styled.a<{ $active?: boolean }>`
  display: flex;
  flex-direction: column;
  align-items: center;
  gap: 6px;
  padding-top: 13px;
  font-size: 26px;
  line-height: 36px;
  text-decoration: none;
  color: ${(p) => (p.$active ? "#f5666f" : "#7a7a7a")};
`;

const QrSlot = styled.div`
  display: flex;
  justify-content: center;
  align-items: flex-start;
`;

const QrButton = styled(IconButton)`
  width: 130px;
  height: 130px;
  margin-top: -14px;
  border-radius: 50%;
  background: #ffa532;
  z-index: 1;
  box-shadow: 0 0 8px 2px #ffe9cc, 0 0 0 16px #fffdfa, 0 0 4px 24px rgba(255, 240, 220, 0.25);
`;

export default App;
